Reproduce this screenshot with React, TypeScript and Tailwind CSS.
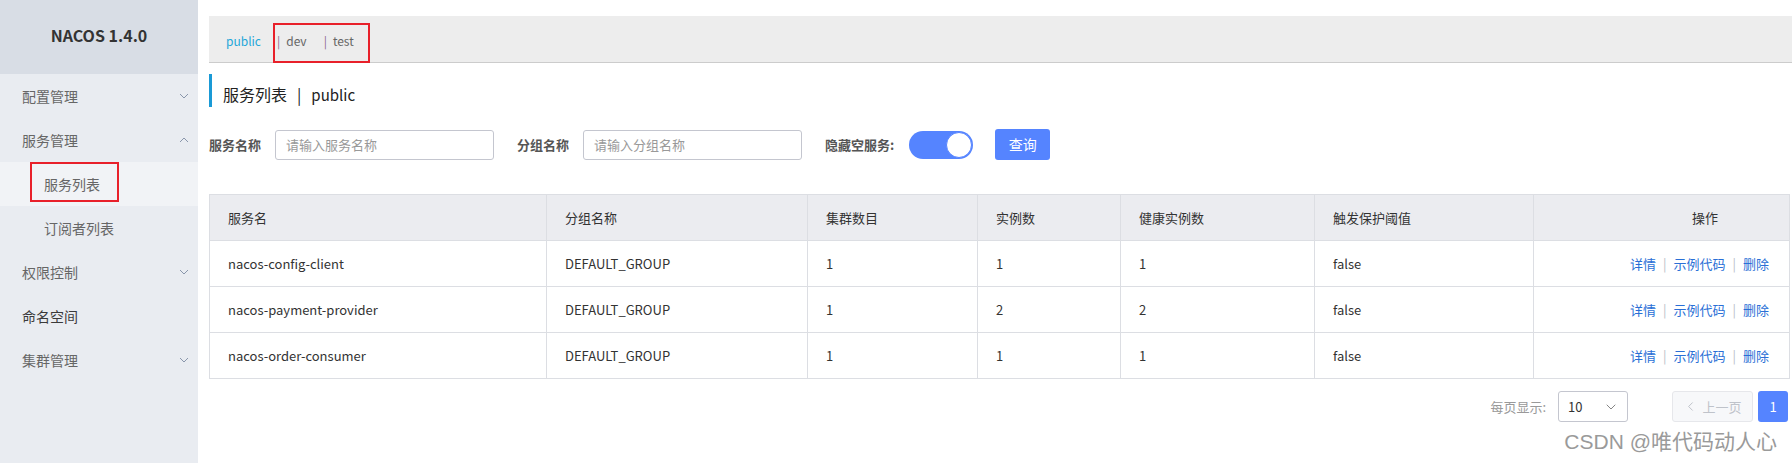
import { ChevronDown, ChevronLeft } from "lucide-react";

const rows = [
  { name: "nacos-config-client", group: "DEFAULT_GROUP", cluster: "1", count: "1", healthy: "1", threshold: "false" },
  { name: "nacos-payment-provider", group: "DEFAULT_GROUP", cluster: "1", count: "2", healthy: "2", threshold: "false" },
  { name: "nacos-order-consumer", group: "DEFAULT_GROUP", cluster: "1", count: "1", healthy: "1", threshold: "false" },
];

function Chevron({ up = false }: { up?: boolean }) {
  return (
    <svg width="10" height="6" viewBox="0 0 10 6" className="text-[#8996ab]">
      <polyline
        points={up ? "1,5 5,1 9,5" : "1,1 5,5 9,1"}
        fill="none"
        stroke="currentColor"
        strokeWidth="1"
      />
    </svg>
  );
}

function MenuItem({
  label,
  chevron,
  dark = false,
}: {
  label: string;
  chevron?: "up" | "down";
  dark?: boolean;
}) {
  return (
    <div className="flex h-[44px] items-center justify-between pl-[22px] pr-[9px]">
      <span className={dark ? "text-[#3a3a3a]" : "text-[#666]"}>{label}</span>
      {chevron && <Chevron up={chevron === "up"} />}
    </div>
  );
}

function Sidebar() {
  return (
    <aside className="w-[198px] shrink-0 bg-[#e9ecf1] text-[14px]">
      <div className="flex h-[74px] items-center justify-center bg-[#d8dde5] pb-[4px] text-[16px] font-bold text-[#333]">
        NACOS 1.4.0
      </div>
      <MenuItem label="配置管理" chevron="down" />
      <MenuItem label="服务管理" chevron="up" />
      <div className="relative flex h-[44px] items-center bg-[#f1f3f6] pl-[44px] text-[#666]">
        服务列表
        <div className="absolute left-[30px] top-0 h-[40px] w-[89px] border-2 border-[#e8202a]" />
      </div>
      <div className="flex h-[44px] items-center pl-[44px] text-[#666]">订阅者列表</div>
      <MenuItem label="权限控制" chevron="down" />
      <MenuItem label="命名空间" dark />
      <MenuItem label="集群管理" chevron="down" />
    </aside>
  );
}

function Field({ label, placeholder }: { label: string; placeholder: string }) {
  return (
    <div className="flex items-center">
      <span className="mr-[14px] font-bold text-[#555]">{label}</span>
      <div className="flex h-[30px] w-[219px] items-center rounded-[3px] border border-[#c4c6cf] bg-white pl-[10px] text-[#999]">
        {placeholder}
      </div>
    </div>
  );
}

const cols = ["w-[337px]", "w-[261px]", "w-[170px]", "w-[143px]", "w-[194px]", "w-[219px]", "flex-1"];

export default function App() {
  return (
    <div className="flex h-[463px] w-[1792px] overflow-hidden bg-white font-['Noto_Sans_CJK_SC','Noto_Sans',sans-serif] text-[13px] text-[#333]">
      <Sidebar />
      <main className="relative flex-1 pl-[11px] pt-[16px]">
        <div className="relative flex h-[47px] items-center border-b border-[#cccccc] bg-[#ededed] pl-[17px] pt-[3px] text-[12px] text-[#666]">
          <span className="mr-[16px] text-[#1fa7d9]">public</span>
          <span className="mr-[17px]">
            <span className="text-[#8b6a8f]">|</span>
            <span className="ml-[6px]">dev</span>
          </span>
          <span>
            <span className="text-[#8b6a8f]">|</span>
            <span className="ml-[6px]">test</span>
          </span>
          <div className="absolute left-[64px] top-[7px] h-[40px] w-[97px] border-2 border-[#e8202a]" />
        </div>

        <div className="pr-[2px]">
          <div className="mt-[11px] flex h-[33px] items-baseline border-l-[3px] border-[#1a9ad6] pl-[11px] pt-[9px] text-[16px] leading-[22px] text-[#222]">
            <span>服务列表</span>
            <span className="mx-[10px]">|</span>
            <span className="text-[15px]">public</span>
          </div>

          <div className="mt-[22px] flex h-[31px] items-center">
            <Field label="服务名称" placeholder="请输入服务名称" />
            <div className="ml-[23px]">
              <Field label="分组名称" placeholder="请输入分组名称" />
            </div>
            <span className="ml-[23px] mr-[15px] font-bold text-[#555]">隐藏空服务:</span>
            <div className="flex h-[28px] w-[64px] items-center justify-end rounded-full bg-[#5584ff] p-[1px]">
              <div className="h-[26px] w-[26px] rounded-full border border-[#5584ff] bg-white" />
            </div>
            <button className="ml-[22px] h-[31px] w-[55px] rounded-[3px] bg-[#5584ff] text-[14px] text-white">
              查询
            </button>
          </div>

          <div className="mt-[34px] border-l border-t border-[#dcdee3]">
            <div className="flex h-[46px] bg-[#ebecf0]">
              {["服务名", "分组名称", "集群数目", "实例数", "健康实例数", "触发保护阈值"].map((h, i) => (
                <div
                  key={h}
                  className={`${cols[i]} flex items-center border-b border-r border-[#dcdee3] pl-[18px]`}
                >
                  {h}
                </div>
              ))}
              <div className="flex flex-1 items-center border-b border-r border-[#dcdee3] pl-[158px]">操作</div>
            </div>
            {rows.map((r) => (
              <div key={r.name} className="flex h-[46px] bg-white">
                {[r.name, r.group, r.cluster, r.count, r.healthy, r.threshold].map((v, i) => (
                  <div
                    key={i}
                    className={`${cols[i]} flex items-center border-b border-r border-[#dcdee3] pl-[18px]`}
                  >
                    {v}
                  </div>
                ))}
                <div className="flex flex-1 items-center justify-end border-b border-r border-[#dcdee3] pr-[20px] text-[#2a6fd6]">
                  <span>详情</span>
                  <span className="mx-[7px] text-[#b8bec8]">|</span>
                  <span>示例代码</span>
                  <span className="mx-[7px] text-[#b8bec8]">|</span>
                  <span>删除</span>
                </div>
              </div>
            ))}
          </div>

          <div className="mt-[12px] flex items-center justify-end pr-[2px]">
            <span className="mr-[12px] text-[#999]">每页显示:</span>
            <div className="flex h-[31px] w-[70px] items-center justify-between rounded-[3px] border border-[#c4c6cf] pl-[9px] pr-[8px]">
              <span>10</span>
              <ChevronDown size={16} strokeWidth={1.2} className="text-[#666]" />
            </div>
            <div className="ml-[44px] flex h-[31px] w-[81px] items-center justify-center rounded-[3px] border border-[#e6e7eb] bg-[#f7f8fa] text-[#bfc3ca]">
              <ChevronLeft size={15} strokeWidth={1.6} />
              <span className="ml-[4px]">上一页</span>
            </div>
            <div className="ml-[5px] flex h-[31px] w-[30px] items-center justify-center rounded-[3px] bg-[#5584ff] text-white">
              1
            </div>
          </div>
        </div>

        <div className="absolute bottom-[6px] right-[15px] font-['Liberation_Sans','Noto_Sans_CJK_SC',sans-serif] text-[21px] text-[#9a9a9a]">
          CSDN @唯代码动人心
        </div>
      </main>
    </div>
  );
}
